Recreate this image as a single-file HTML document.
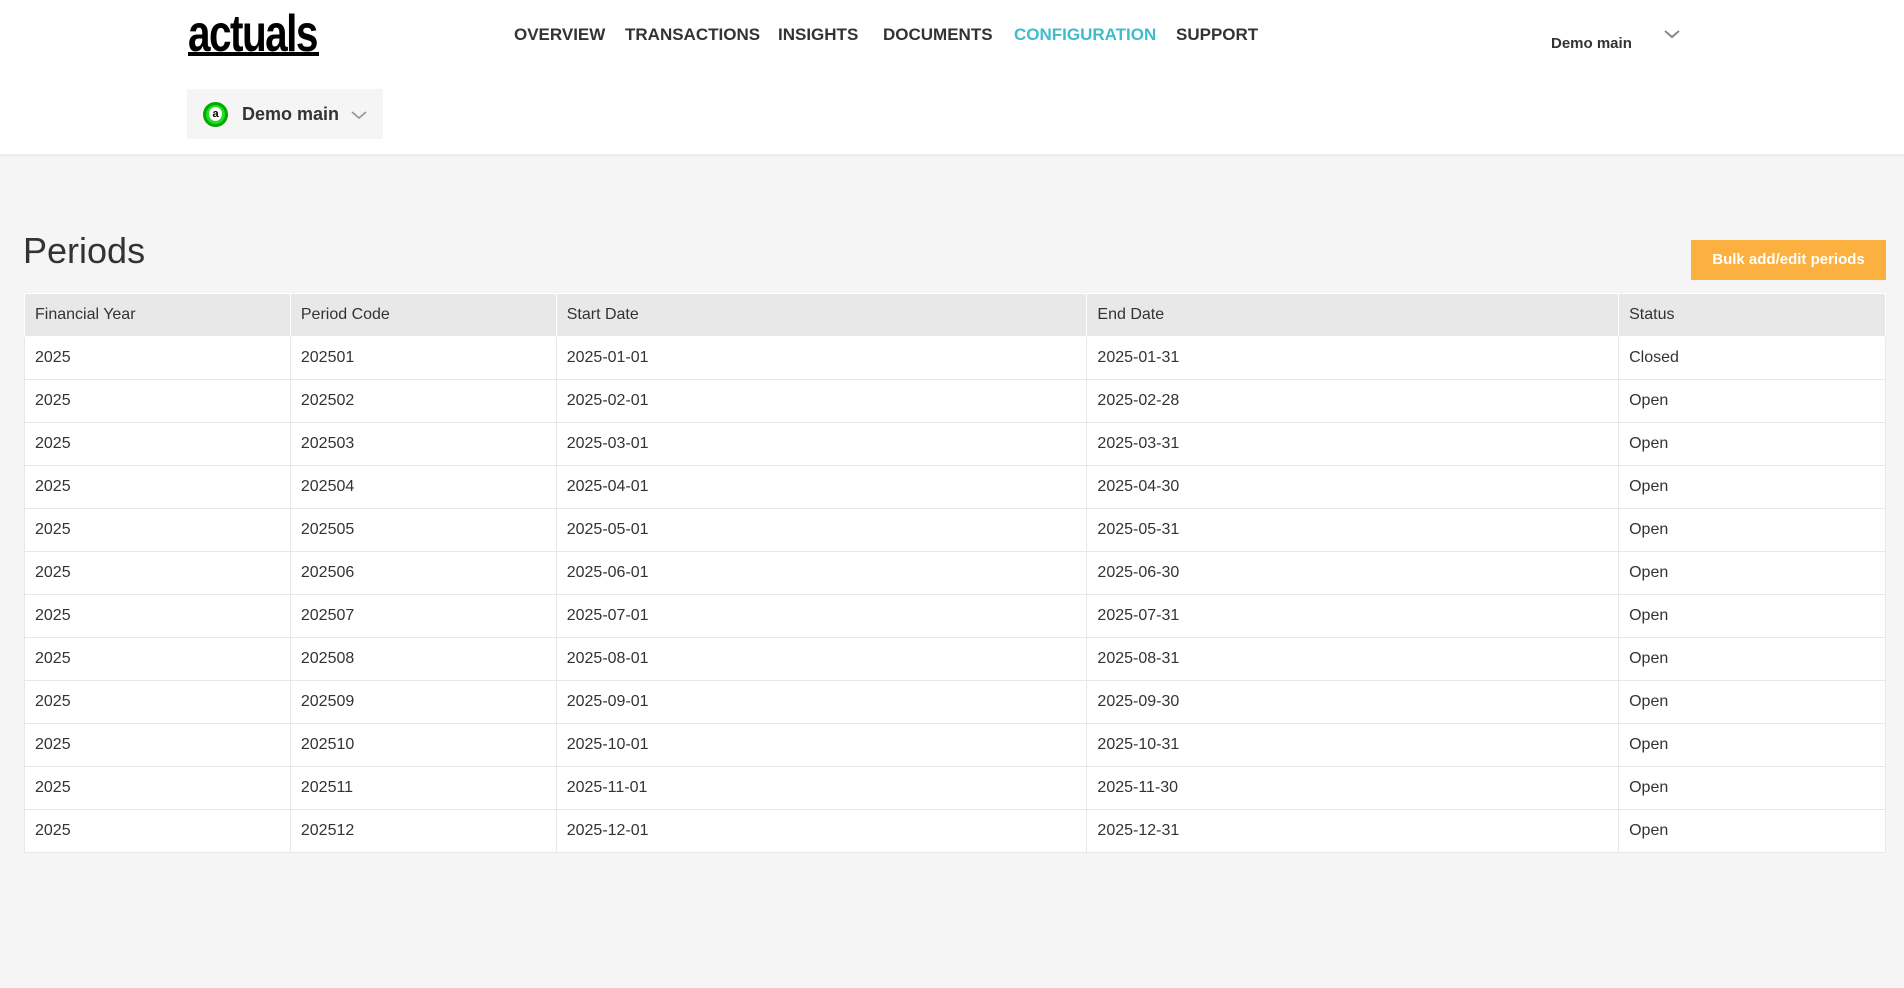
<!DOCTYPE html>
<html><head><meta charset="utf-8"><style>
*{box-sizing:border-box;margin:0;padding:0}
body{width:1904px;height:988px;background:#f5f5f5;font-family:"Liberation Sans",sans-serif;color:#333;position:relative;overflow:hidden}
.hdr{position:absolute;left:0;top:0;width:1904px;height:154px;background:#fff;box-shadow:0 2px 4px rgba(0,0,0,.05)}
.logo{position:absolute;left:188px;top:4px;font-family:"Liberation Sans Narrow","Liberation Sans",sans-serif;font-weight:bold;font-size:52px;letter-spacing:-2px;color:#000;transform:scaleX(.78);transform-origin:left}
.logoline{position:absolute;left:188px;top:52px;width:131px;height:4px;background:#000}
.nav{position:absolute;top:25px;font-size:17px;font-weight:bold;color:#333}
.sel{position:absolute;left:187px;top:89px;width:196px;height:50px;background:#f5f5f5}
.sel .ic{position:absolute;left:16px;top:13px;width:25px;height:25px;border-radius:50%;background:#22dd22;border:3px solid #0a0}
.sel .ic span{position:absolute;left:3px;top:2px;width:13px;height:14px;background:#fff;border-radius:50%;font-size:11px;font-weight:bold;color:#000;text-align:center;line-height:14px}
.sel .t{position:absolute;left:55px;top:15px;font-size:18px;font-weight:bold;color:#333}
h1{position:absolute;left:23px;top:230px;font-size:36px;font-weight:normal;color:#333}
.btn{position:absolute;left:1691px;top:240px;width:195px;height:40px;background:#fbb040;color:#fff;font-weight:bold;font-size:15px;text-align:center;line-height:40px}
table{position:absolute;left:24px;top:293px;width:1862px;border-collapse:collapse;font-size:16px;background:#fff}
td,th{height:43px;padding:0 10px;text-align:left;font-weight:normal;border:1px solid #e8e8e8;color:#333}
th{background:#e8e8e8;border-color:#fff}
</style></head><body>
<div class="hdr">
<div class="logo">actuals</div><div class="logoline"></div>
<div class="nav" style="left:514px">OVERVIEW</div>
<div class="nav" style="left:625px">TRANSACTIONS</div>
<div class="nav" style="left:778px">INSIGHTS</div>
<div class="nav" style="left:883px">DOCUMENTS</div>
<div class="nav" style="left:1014px;color:#3dbcca">CONFIGURATION</div>
<div class="nav" style="left:1176px">SUPPORT</div>
<div style="position:absolute;left:1551px;top:35px;font-size:15px;font-weight:bold;color:#333">Demo main</div>
<svg style="position:absolute;left:1663px;top:28px" width="18" height="12"><path d="M2 3l7 6 7-6" fill="none" stroke="#888" stroke-width="2"/></svg>
<div class="sel"><div class="ic"><span>a</span></div><div class="t">Demo main</div>
<svg style="position:absolute;left:163px;top:20px" width="18" height="12"><path d="M2 3l7 6 7-6" fill="none" stroke="#999" stroke-width="1.8"/></svg></div>
</div>
<h1>Periods</h1>
<div class="btn">Bulk add/edit periods</div>
<table>
<colgroup><col style="width:266px"><col style="width:266px"><col style="width:531px"><col style="width:532px"><col style="width:267px"></colgroup>
<tr><th>Financial Year</th><th>Period Code</th><th>Start Date</th><th>End Date</th><th>Status</th></tr>
<tr><td>2025</td><td>202501</td><td>2025-01-01</td><td>2025-01-31</td><td>Closed</td></tr>
<tr><td>2025</td><td>202502</td><td>2025-02-01</td><td>2025-02-28</td><td>Open</td></tr>
<tr><td>2025</td><td>202503</td><td>2025-03-01</td><td>2025-03-31</td><td>Open</td></tr>
<tr><td>2025</td><td>202504</td><td>2025-04-01</td><td>2025-04-30</td><td>Open</td></tr>
<tr><td>2025</td><td>202505</td><td>2025-05-01</td><td>2025-05-31</td><td>Open</td></tr>
<tr><td>2025</td><td>202506</td><td>2025-06-01</td><td>2025-06-30</td><td>Open</td></tr>
<tr><td>2025</td><td>202507</td><td>2025-07-01</td><td>2025-07-31</td><td>Open</td></tr>
<tr><td>2025</td><td>202508</td><td>2025-08-01</td><td>2025-08-31</td><td>Open</td></tr>
<tr><td>2025</td><td>202509</td><td>2025-09-01</td><td>2025-09-30</td><td>Open</td></tr>
<tr><td>2025</td><td>202510</td><td>2025-10-01</td><td>2025-10-31</td><td>Open</td></tr>
<tr><td>2025</td><td>202511</td><td>2025-11-01</td><td>2025-11-30</td><td>Open</td></tr>
<tr><td>2025</td><td>202512</td><td>2025-12-01</td><td>2025-12-31</td><td>Open</td></tr>
</table>
</body></html>
